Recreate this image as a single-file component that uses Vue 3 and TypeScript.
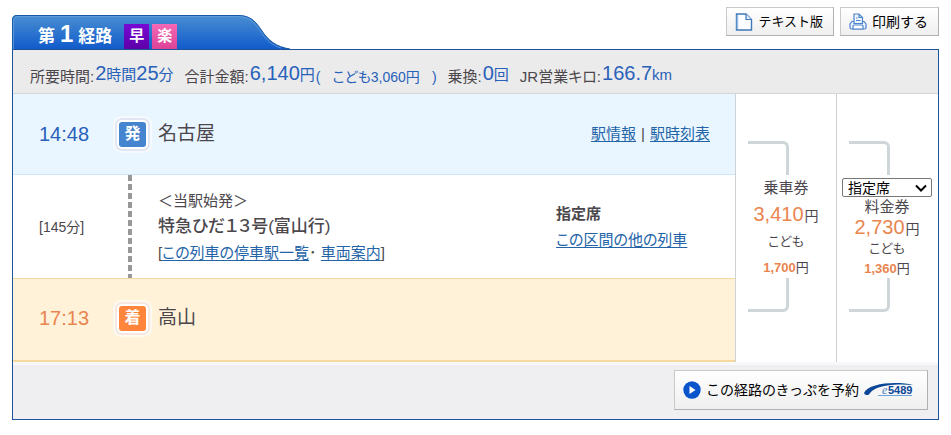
<script setup lang="ts">
import { ref } from 'vue'

interface Fare {
  name: string
  adult: string
  child: string
  seats: string[]
}

const fares: Fare[] = [
  { name: '乗車券', adult: '3,410', child: '1,700', seats: [] },
  { name: '料金券', adult: '2,730', child: '1,360', seats: ['指定席', '自由席', 'グリーン'] },
]
const seat = ref('指定席')
</script>

<template>
  <main class="page">
    <header class="top">
      <div class="tab">
        <svg class="tab-shape" viewBox="0 0 278 34" aria-hidden="true">
          <defs>
            <linearGradient id="tabFill" x1="0" y1="0" x2="0" y2="1">
              <stop offset="0" stop-color="#4a8fd2" />
              <stop offset="1" stop-color="#115bcb" />
            </linearGradient>
          </defs>
          <path d="M0 34V5Q0 0 5 0H226C239 0 244 7 250 16C256 25 264 32 278 34Z" fill="url(#tabFill)" />
          <path d="M.5 34V5Q.5 .5 5 .5H226C239 .5 244 7 250 16C256 25 264 32 278 34" fill="none" stroke="#1858a6" />
          <path d="M1.500 34V6Q1.500 1.500 6 1.500H226C238 1.500 243 8 249 17C254 25 261 31 269 33" fill="none" stroke="#6ba5e0" stroke-opacity=".7" />
        </svg>
        <h1 class="tab-title">第<span class="tab-num">1</span>経路</h1>
        <span class="tag tag-fast">早</span>
        <span class="tag tag-easy">楽</span>
      </div>
      <div class="tools">
        <button type="button" class="btn tool">
          <svg width="18" height="18" viewBox="0 0 18 18" aria-hidden="true">
            <path d="M1.500 1H11L16.500 6.500V17H1.500Z" fill="#fbfdff" stroke="#3f78b8" stroke-width="1.400" />
            <path d="M2.500 2V16" stroke="#9cc0ea" stroke-width="1.500" />
            <path d="M11 1V6.500H16.500" fill="#dbe9f8" stroke="#3f78b8" stroke-width="1.200" />
          </svg>
          <span class="tool-small">テキスト版</span>
        </button>
        <button type="button" class="btn tool">
          <svg width="18" height="18" viewBox="0 0 18 18" aria-hidden="true" fill="#eef5fd" stroke="#4b82cc" stroke-width="1.200">
            <path d="M3 8.500L1 11V14.500Q1 16 2.500 16H15.500Q17 16 17 14.500V11L15 8.500Z" />
            <path d="M5 10.500V1H10L13.500 4.500V10.500Z" />
            <path d="M10 1V4.500H13.500M7 5H8.500M7 7.500H11.500" fill="none" />
            <path d="M4 16V13Q4 12 5 12H13Q14 12 14 13V16Z" fill="#fff" />
          </svg>
          <span>印刷する</span>
        </button>
      </div>
    </header>

    <section class="panel">
      <div class="summary">
        <div class="item"><span class="label">所要時間:</span><span class="value"><b>2</b>時間<b>25</b>分</span></div>
        <div class="item"><span class="label">合計金額:</span><span class="value"><b>6,140</b>円</span><span class="child"><i>(</i><span>こども3,060円</span><i>)</i></span></div>
        <div class="item"><span class="label">乗換:</span><span class="value"><b>0</b>回</span></div>
        <div class="item"><span class="label">JR営業キロ:</span><span class="value"><b>166.7</b>km</span></div>
      </div>

      <div class="route">
        <div class="legs">
          <div class="row depart">
            <span class="time">14:48</span>
            <span class="mark">発</span>
            <span class="station">名古屋</span>
            <span class="station-links"><a href="#info">駅情報</a><span>|</span><a href="#timetable">駅時刻表</a></span>
          </div>
          <div class="row ride">
            <span class="duration">[145分]</span>
            <span class="track"></span>
            <div class="train">
              <span class="note">＜当駅始発＞</span>
              <strong class="train-name">特急ひだ１３号(富山行)</strong>
              <span class="line">[<a href="#stops">この列車の停車駅一覧</a>･ <a href="#cars">車両案内</a>]</span>
            </div>
            <div class="seat">
              <strong>指定席</strong>
              <a href="#others">この区間の他の列車</a>
            </div>
          </div>
          <div class="row arrive">
            <span class="time">17:13</span>
            <span class="mark">着</span>
            <span class="station">高山</span>
          </div>
        </div>

        <div v-for="fare in fares" :key="fare.name" class="fare">
          <span class="bracket upper"></span>
          <div class="fare-body" :class="{ compact: fare.seats.length }">
            <span v-if="fare.seats.length" class="picker">
              <select v-model="seat" aria-label="座席">
                <option v-for="s in fare.seats" :key="s">{{ s }}</option>
              </select>
              <svg class="chevron" width="12" height="8" viewBox="0 0 12 8" aria-hidden="true">
                <path d="M1 1.500L6 6.500L11 1.500" fill="none" stroke="#000" stroke-width="2" />
              </svg>
            </span>
            <span class="fare-name">{{ fare.name }}</span>
            <span class="adult"><b>{{ fare.adult }}</b>円</span>
            <span class="kid">こども</span>
            <span class="kid-price"><b>{{ fare.child }}</b>円</span>
          </div>
          <span class="bracket lower"></span>
        </div>
      </div>

      <footer class="foot">
        <button type="button" class="btn reserve">
          <svg width="18" height="18" viewBox="0 0 18 18" aria-hidden="true">
            <circle cx="9" cy="9" r="8.700" fill="#0a55cc" />
            <path d="M6.500 5L12.500 9L6.500 13Z" fill="#fff" />
          </svg>
          <span>この経路のきっぷを予約</span>
          <svg width="50" height="16" viewBox="0 0 50 16" role="img" aria-label="e5489">
            <path d="M0 11C3 4 17 1 31 1C38 1 44 1.500 49 3C36 1.800 21 2.500 12 6.500C8 8.500 7 10 5 12.500Q1 14 0 11Z" fill="#0b4698" />
            <text x="18" y="12" class="logo-e">e</text>
            <text x="24" y="12" class="logo-n">5489</text>
            <path d="M14 13.500H48" fill="none" stroke="#6da3d8" />
          </svg>
        </button>
      </footer>
    </section>
  </main>
</template>

<style>
body {
  margin: 0;
  background: #fff;
}
</style>

<style scoped>
.page {
  padding: 7px 12px 0;
  color: #4b474c;
  font: 15px/20px "Liberation Sans", "Noto Sans CJK JP", sans-serif;
}
.page * {
  box-sizing: border-box;
}
b, i {
  font-weight: normal;
  font-style: normal;
}
a {
  color: #2364a8;
  text-decoration: underline;
  text-underline-offset: 2px;
}
.top {
  display: flex;
  justify-content: space-between;
  align-items: flex-start;
}
.tab {
  position: relative;
  display: flex;
  align-items: flex-end;
  width: 278px;
  height: 34px;
  margin-top: 8px;
  padding-left: 26px;
}
.tab-shape {
  position: absolute;
  inset: 0;
  width: 100%;
  height: 100%;
}
.tab-title {
  position: relative;
  display: flex;
  align-items: baseline;
  gap: 5px;
  margin: 0 12px 0 0;
  color: #fff;
  font-size: 17px;
  font-weight: bold;
  line-height: 24px;
}
.tab-num {
  font-size: 24px;
}
.tag {
  position: relative;
  width: 25px;
  height: 25px;
  margin-right: 3px;
  color: #fff;
  font-size: 15px;
  font-weight: bold;
  line-height: 24px;
  text-align: center;
}
.tag-fast {
  background: linear-gradient(#7808d4, #5d00a8);
}
.tag-easy {
  background: linear-gradient(#f568b6, #dc4397);
}
.tools {
  display: flex;
  gap: 6px;
}
.btn {
  display: flex;
  align-items: center;
  border: 1px solid #c9c9c9;
  border-right-color: #b0b0b3;
  border-bottom-color: #b0b0b3;
  background: linear-gradient(#fff, #efefef);
  color: #000;
  font: 14px/20px "Liberation Sans", "Noto Sans CJK JP", sans-serif;
  white-space: nowrap;
  cursor: pointer;
}
.tool {
  gap: 5px;
  height: 29px;
  padding: 0 10px 0 8px;
}
.tool-small {
  font-size: 13px;
}
.panel {
  border: 1px solid #1d539b;
}
.summary {
  display: flex;
  gap: 11px;
  height: 44px;
  padding: 0 17px;
  border-bottom: 1px solid #d3d6d9;
  background: #ebebeb;
  white-space: nowrap;
}
.item {
  display: flex;
  align-items: flex-start;
  gap: 1px;
}
.label {
  margin-top: 17px;
  font-feature-settings: "palt";
}
.value {
  margin-top: 13px;
  color: #2861ba;
  line-height: 20px;
}
.value b {
  font-size: 20px;
}
.child {
  display: flex;
  gap: 12px;
  margin-top: 17px;
  color: #2861ba;
  font-size: 14px;
  font-feature-settings: "palt";
}
.route {
  display: grid;
  grid-template-columns: minmax(0, 1fr) 101px 101px;
  padding-right: 1px;
}
.row {
  display: grid;
  align-items: center;
  grid-template-columns: 80px 39px minmax(0, 1fr) auto;
  padding: 0 25px 0 26px;
}
.depart {
  height: 81px;
  border-bottom: 1px solid #cfe4f4;
  background: #eaf6ff;
}
.ride {
  height: 103px;
  grid-template-columns: 89px 30px minmax(0, 1fr) 154px;
}
.arrive {
  height: 84px;
  padding-bottom: 3px;
  border-top: 1px solid #f5d99f;
  border-bottom: 2px solid #f5d99f;
  background: #fff2d9;
}
.time {
  color: #2861ba;
  font-size: 20px;
}
.arrive .time {
  color: #ea8550;
}
.mark {
  width: 27px;
  height: 25px;
  border-radius: 3px;
  background: #4584cf;
  box-shadow: 0 0 0 2px #fff, 0 0 0 4px #e2e6f3, 0 0 0 6px #f5faff;
  color: #fff;
  font-size: 16px;
  font-weight: bold;
  line-height: 24px;
  text-align: center;
}
.arrive .mark {
  background: #ff843c;
  box-shadow: 0 0 0 2px #fff, 0 0 0 4px #f6e8e0, 0 0 0 6px #fff9f0;
}
.station {
  font-size: 19px;
  line-height: 24px;
}
.station-links {
  display: flex;
  gap: 5px;
}
.duration {
  font-size: 14px;
}
.track {
  justify-self: start;
  width: 4px;
  height: 100%;
  background: repeating-linear-gradient(#989898 0 6px, #fff 6px 9px);
}
.train, .seat {
  display: flex;
  flex-direction: column;
  align-items: flex-start;
  line-height: 26px;
  white-space: nowrap;
  font-feature-settings: "palt";
}
.train-name {
  font-size: 17px;
  font-weight: 500;
}
.fare {
  display: flex;
  flex-direction: column;
  padding-top: 47px;
  border-left: 1px solid #ccd2d5;
}
.bracket {
  width: 41px;
  height: 34px;
  margin-left: 12px;
  border-right: 3px solid #ced6da;
}
.upper {
  border-top: 3px solid #ced6da;
  border-top-right-radius: 6px;
}
.lower {
  border-bottom: 3px solid #ced6da;
  border-bottom-right-radius: 6px;
}
.fare-body {
  display: flex;
  flex-direction: column;
  align-items: center;
  height: 103px;
  font-size: 14px;
  line-height: 26px;
}
.fare-name {
  font-size: 15px;
}
.adult b {
  margin-right: 1px;
  color: #ea8550;
  font-size: 20px;
}
.kid {
  font-size: 13px;
  font-feature-settings: "palt";
}
.kid-price {
  font-size: 13px;
}
.kid-price b {
  color: #ea8550;
  font-weight: bold;
}
.compact {
  line-height: 20px;
}
.picker {
  position: relative;
  display: flex;
  flex: none;
  width: 90px;
  margin-top: 3px;
}
select {
  width: 100%;
  height: 19px;
  padding: 0 0 0 5px;
  appearance: none;
  border: 1px solid #777;
  border-radius: 2px;
  background: #fff;
  color: #000;
  font: 14px/17px "Noto Sans CJK JP", sans-serif;
}
.chevron {
  position: absolute;
  top: 6px;
  right: 5px;
  pointer-events: none;
}
.foot {
  display: flex;
  justify-content: flex-end;
  padding: 5px 10px 9px;
  border-top: 3px solid #f8f8fa;
  background: #efeff1;
}
.reserve {
  height: 40px;
  gap: 5px;
  padding: 0 13px 0 8px;
}
.logo-e {
  fill: #4c80bd;
  font: italic 12px "Liberation Serif", serif;
}
.logo-n {
  fill: #0b4698;
  font: bold 11px "Liberation Sans", sans-serif;
}
</style>
